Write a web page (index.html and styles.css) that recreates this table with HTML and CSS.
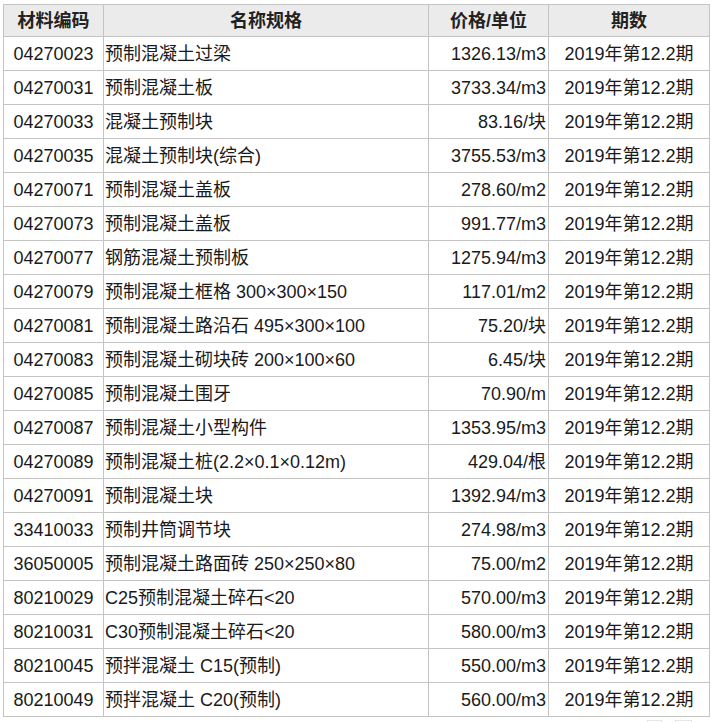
FILE: index.html
```html
<!DOCTYPE html>
<html lang="zh-CN">
<head>
<meta charset="utf-8">
<title>材料价格</title>
<link rel="stylesheet" href="styles.css">
</head>
<body>
<table class="price-table">
  <colgroup>
    <col class="c-code">
    <col class="c-name">
    <col class="c-price">
    <col class="c-period">
  </colgroup>
  <thead>
    <tr><th>材料编码</th><th>名称规格</th><th>价格/单位</th><th>期数</th></tr>
  </thead>
  <tbody>
    <tr><td class="code">04270023</td><td class="name">预制混凝土过梁</td><td class="price">1326.13/m3</td><td class="period">2019年第12.2期</td></tr>
    <tr><td class="code">04270031</td><td class="name">预制混凝土板</td><td class="price">3733.34/m3</td><td class="period">2019年第12.2期</td></tr>
    <tr><td class="code">04270033</td><td class="name">混凝土预制块</td><td class="price">83.16/块</td><td class="period">2019年第12.2期</td></tr>
    <tr><td class="code">04270035</td><td class="name">混凝土预制块(综合)</td><td class="price">3755.53/m3</td><td class="period">2019年第12.2期</td></tr>
    <tr><td class="code">04270071</td><td class="name">预制混凝土盖板</td><td class="price">278.60/m2</td><td class="period">2019年第12.2期</td></tr>
    <tr><td class="code">04270073</td><td class="name">预制混凝土盖板</td><td class="price">991.77/m3</td><td class="period">2019年第12.2期</td></tr>
    <tr><td class="code">04270077</td><td class="name">钢筋混凝土预制板</td><td class="price">1275.94/m3</td><td class="period">2019年第12.2期</td></tr>
    <tr><td class="code">04270079</td><td class="name">预制混凝土框格 300×300×150</td><td class="price">117.01/m2</td><td class="period">2019年第12.2期</td></tr>
    <tr><td class="code">04270081</td><td class="name">预制混凝土路沿石 495×300×100</td><td class="price">75.20/块</td><td class="period">2019年第12.2期</td></tr>
    <tr><td class="code">04270083</td><td class="name">预制混凝土砌块砖 200×100×60</td><td class="price">6.45/块</td><td class="period">2019年第12.2期</td></tr>
    <tr><td class="code">04270085</td><td class="name">预制混凝土围牙</td><td class="price">70.90/m</td><td class="period">2019年第12.2期</td></tr>
    <tr><td class="code">04270087</td><td class="name">预制混凝土小型构件</td><td class="price">1353.95/m3</td><td class="period">2019年第12.2期</td></tr>
    <tr><td class="code">04270089</td><td class="name">预制混凝土桩(2.2×0.1×0.12m)</td><td class="price">429.04/根</td><td class="period">2019年第12.2期</td></tr>
    <tr><td class="code">04270091</td><td class="name">预制混凝土块</td><td class="price">1392.94/m3</td><td class="period">2019年第12.2期</td></tr>
    <tr><td class="code">33410033</td><td class="name">预制井筒调节块</td><td class="price">274.98/m3</td><td class="period">2019年第12.2期</td></tr>
    <tr><td class="code">36050005</td><td class="name">预制混凝土路面砖 250×250×80</td><td class="price">75.00/m2</td><td class="period">2019年第12.2期</td></tr>
    <tr><td class="code">80210029</td><td class="name">C25预制混凝土碎石&lt;20</td><td class="price">570.00/m3</td><td class="period">2019年第12.2期</td></tr>
    <tr><td class="code">80210031</td><td class="name">C30预制混凝土碎石&lt;20</td><td class="price">580.00/m3</td><td class="period">2019年第12.2期</td></tr>
    <tr><td class="code">80210045</td><td class="name">预拌混凝土 C15(预制)</td><td class="price">550.00/m3</td><td class="period">2019年第12.2期</td></tr>
    <tr><td class="code">80210049</td><td class="name">预拌混凝土 C20(预制)</td><td class="price">560.00/m3</td><td class="period">2019年第12.2期</td></tr>
  </tbody>
</table>
<div class="pager"><span class="pg pg-a"></span><span class="pg pg-b"></span></div>
</body>
</html>
```

FILE: styles.css
```css
html, body {
  margin: 0;
  padding: 0;
  background: #ffffff;
}
body {
  padding: 4px 0 0 3px;
  font-family: "Liberation Sans", "Noto Sans CJK SC", sans-serif;
  font-size: 18px;
  line-height: 22px;
  color: #1a1a1a;
}
.price-table {
  border-collapse: collapse;
  table-layout: fixed;
  width: 706px;
}
.c-code { width: 100px; }
.c-name { width: 325px; }
.c-price { width: 120px; }
.c-period { width: 161px; }
.price-table th,
.price-table td {
  border: 1px solid #c4c4c4;
  padding: 0;
  white-space: nowrap;
  overflow: hidden;
  line-height: 22px;
}
.price-table th {
  height: 31px;
  background: #ebebeb;
  font-weight: bold;
  text-align: center;
  color: #222;
}
.price-table td {
  height: 33px;
}
.code { text-align: center; }
.name { text-align: left; padding-left: 1px !important; }
.price { text-align: right; padding-right: 2px !important; }
.period { text-align: center; }
.pager {
  display: flex;
  justify-content: flex-end;
  gap: 13px;
  padding-right: 19px;
  margin-top: 3px;
  height: 10px;
}
.pg {
  height: 12px;
  border: 1px solid #e6e6e6;
  border-bottom: none;
}
.pg-a { width: 13px; }
.pg-b { width: 15px; }
```
